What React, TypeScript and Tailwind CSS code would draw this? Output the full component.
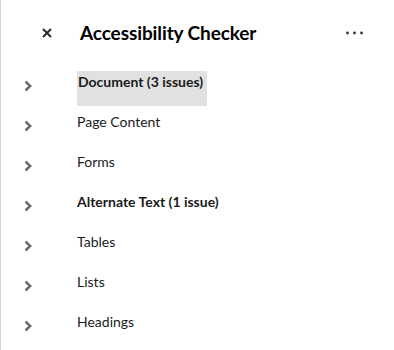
const items = [
  { label: "Document (3 issues)", bold: true, active: true },
  { label: "Page Content" },
  { label: "Forms" },
  { label: "Alternate Text (1 issue)", bold: true },
  { label: "Tables" },
  { label: "Lists" },
  { label: "Headings" },
];

function Chevron() {
  return (
    <svg width="8" height="12" viewBox="0 0 8 12" className="shrink-0">
      <path d="M1.5 1.5 L6.2 6 L1.5 10.5" fill="none" stroke="#6e6e6e" strokeWidth="2.6" />
    </svg>
  );
}

export default function App() {
  return (
    <div className="w-[394px] h-[350px] bg-white border-l border-[#d4d4d4] overflow-hidden font-['Lato',_'Liberation_Sans',_sans-serif] text-[#1b1b1b]">
      <header className="flex items-center h-[66px] pl-[40px] pr-[31px]">
        <button className="w-3 h-3 flex items-center justify-center">
          <svg width="10" height="10" viewBox="0 0 10 10">
            <path d="M1 1 L9 9 M9 1 L1 9" stroke="#2a2a2a" strokeWidth="2" />
          </svg>
        </button>
        <h1 className="ml-[27px] text-[19px] font-bold leading-6 tracking-[-0.1px] text-black">Accessibility Checker</h1>
        <svg width="17" height="4" viewBox="0 0 17 4" className="ml-auto">
          <circle cx="1.5" cy="2" r="1.4" fill="#333" />
          <circle cx="8.5" cy="2" r="1.4" fill="#333" />
          <circle cx="15.5" cy="2" r="1.4" fill="#333" />
        </svg>
      </header>
      <ul className="mt-[5px]">
        {items.map((it) => (
          <li key={it.label} className="flex h-10 pl-[23px]">
            <div className="pt-[9px]">
              <Chevron />
            </div>
            <div className="ml-[45px]">
              <span
                className={`block text-[14px] leading-5 ${it.bold ? "font-bold" : ""} ${
                  it.active ? "bg-[#e1e1e1] w-[130px] h-[35px] pl-[1px] pt-[1px]" : "pt-[1px]"
                }`}
              >
                {it.label}
              </span>
            </div>
          </li>
        ))}
      </ul>
    </div>
  );
}
